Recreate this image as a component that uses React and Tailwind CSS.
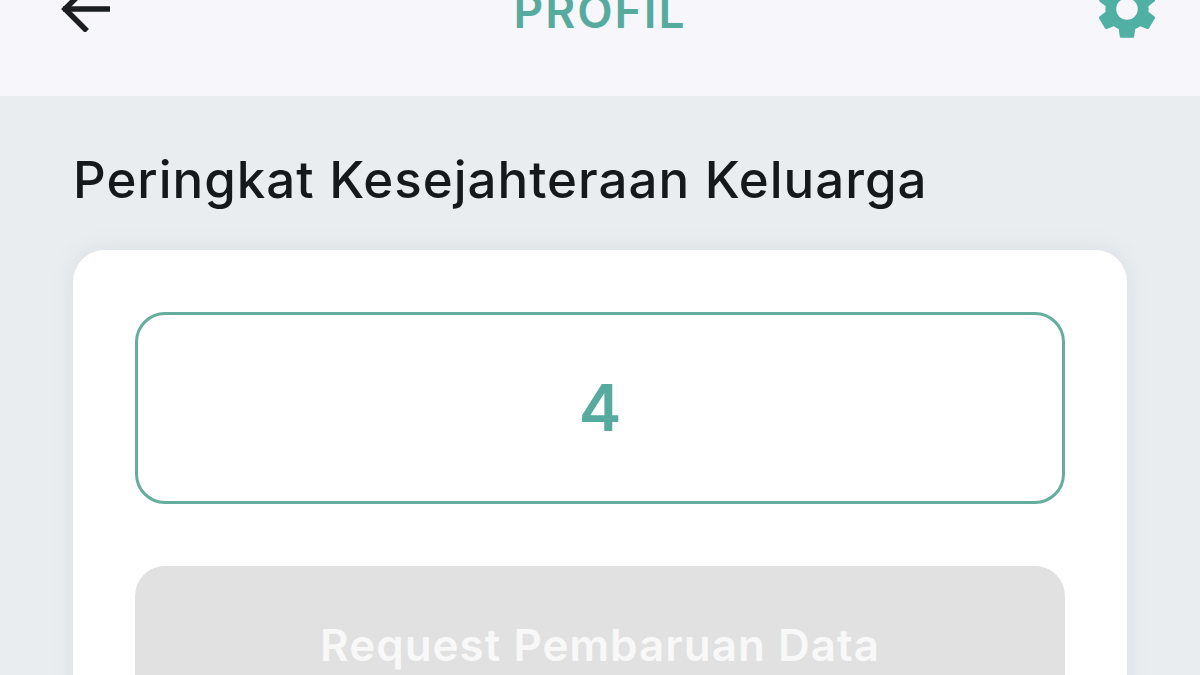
import { MdSettings } from 'react-icons/md';

const BackArrow = () => (
  <svg width="50" height="46" viewBox="0 0 50 46" fill="none" stroke="#1b1d20" strokeWidth="5.5">
    <path d="M2 23H49" />
    <path d="M26 1L4 23L26 45" />
  </svg>
);

const App = () => {
  return (
    <div className="h-[675px] overflow-hidden bg-[#e9edf0] font-['Inter',sans-serif]">
      {/* header, cut off by the top of the photo */}
      <header className="h-[96px] bg-[#f6f6fb]">
        <div className="grid h-[18px] grid-cols-[1fr_auto_1fr] grid-rows-[18px] items-center px-[37px]">
          <div className="ml-[24px]">
            <BackArrow />
          </div>
          <h1 className="mt-1 text-[46px] font-semibold leading-none tracking-[2px] text-[#57ab9e]">PROFIL</h1>
          <MdSettings className="justify-self-end text-[#4fb0a3]" size={72} />
        </div>
      </header>

      <main className="px-[73px] pt-[53px]">
        <h2 className="text-[51px] font-medium leading-[62px] tracking-[1px] text-[#16191c]">Peringkat Kesejahteraan Keluarga</h2>

        <section className="mt-[39px] rounded-[32px] bg-white px-[62px] pt-[62px] shadow-[0_0_24px_rgba(120,130,140,0.12)]">
          <div className="flex h-[192px] items-center justify-center rounded-[30px] border-[3px] border-[#66ad9e] text-[64px] font-semibold text-[#57ab9e]">
            4
          </div>
          <button className="mt-[62px] block h-[160px] w-full rounded-[30px] bg-[#e1e1e1] pb-[65px] pt-[56px] text-[44px] font-semibold leading-[46px] tracking-[1px] text-[#f8f8f8]">
            Request Pembaruan Data
          </button>
        </section>
      </main>
    </div>
  );
};

export default App;
